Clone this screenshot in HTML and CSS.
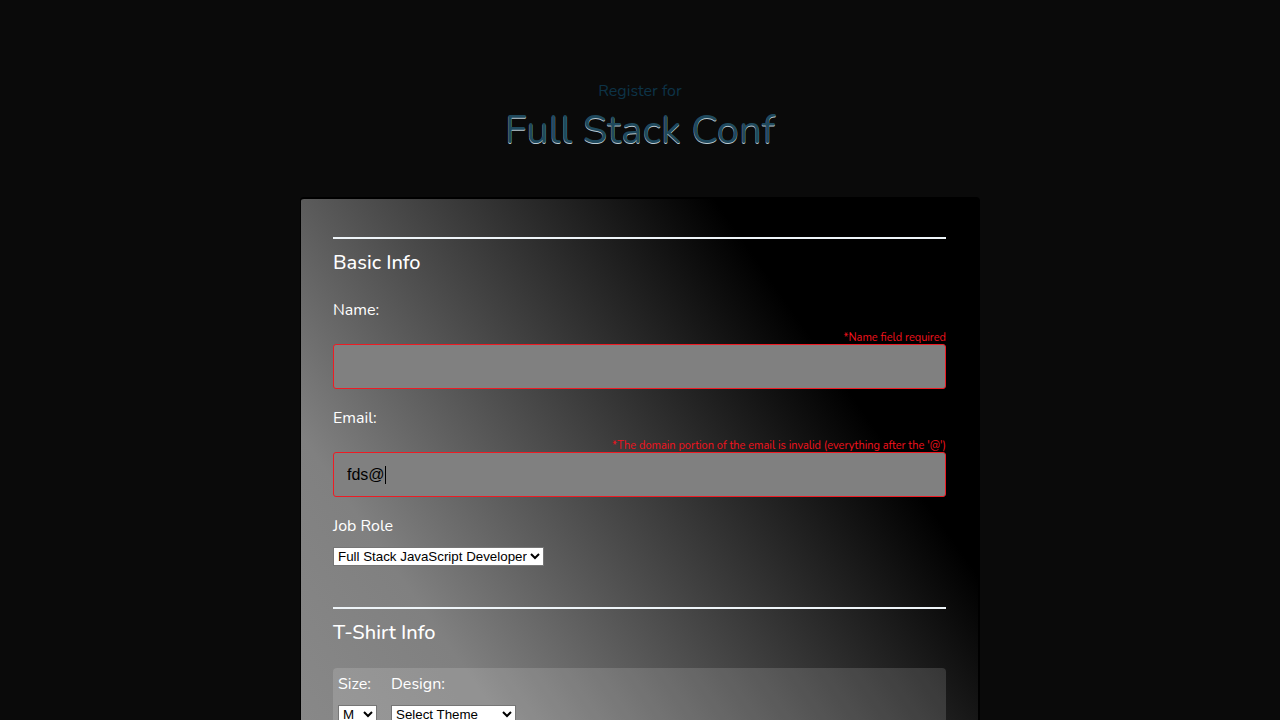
FILE: index.html
```html
<!DOCTYPE html>
<html lang="en">
<head>
<meta charset="utf-8">
<meta name="viewport" content="width=device-width, initial-scale=1">
<title>Full Stack Conf</title>
<link rel="stylesheet" href="styles.css">
</head>
<body>
<div class="container">
  <header class="masthead">
    <p class="kicker">Register for</p>
    <h1 class="title">Full Stack Conf</h1>
  </header>
  <form class="panel" novalidate>
    <fieldset class="section">
      <legend class="legend">Basic Info</legend>
      <label class="label" for="name">Name:</label>
      <p class="error" id="name-error">*Name field required</p>
      <div class="control">
        <input class="field" type="text" id="name" aria-describedby="name-error">
      </div>
      <label class="label" for="mail">Email:</label>
      <p class="error" id="mail-error">*The domain portion of the email is invalid (everything after the '@')</p>
      <div class="control">
        <input class="field" type="text" id="mail" value="fds@" aria-describedby="mail-error">
        <span class="caret"></span>
      </div>
      <label class="label" for="role">Job Role</label>
      <select class="select role" id="role"><option>Full Stack JavaScript Developer</option></select>
    </fieldset>
    <fieldset class="section">
      <legend class="legend">T-Shirt Info</legend>
      <div class="shirt">
        <div class="choice">
          <label class="label" for="size">Size:</label>
          <select class="select size" id="size"><option>M</option></select>
        </div>
        <div class="choice">
          <label class="label" for="design">Design:</label>
          <select class="select design" id="design"><option>Select Theme</option></select>
        </div>
      </div>
    </fieldset>
  </form>
</div>
</body>
</html>
```
FILE: styles.css
```css
* { box-sizing: border-box; }
html { background: #0a0a0a; scrollbar-width: none; }
body {
  margin: 0;
  color: #fff;
  font: 16px/24px "Nunito", "Open Sans", sans-serif;
}
.container {
  max-width: 680px;
  margin: 0 auto;
  padding-top: 79px;
}
.masthead { margin-bottom: 40px; text-align: center; }
.kicker { margin: 0; color: #0d3347; }
.title {
  margin: 0;
  color: #1f495d;
  font-size: 40px;
  font-weight: 400;
  line-height: 54px;
  text-shadow: 0 1px 0 #b9c8cf;
}
.panel {
  padding: 38px 32px 48px;
  border: solid #000;
  border-width: 2px 2px 2px 1px;
  border-radius: 4px;
  background: linear-gradient(235deg, #000 216px, #808080 690px, #999 1200px);
}
.section { margin: 0 0 41px; padding: 0; border: 0; min-width: 0; }
.legend {
  width: 100%;
  padding: 8px 0 19px;
  border-top: 2px solid #eef4f8;
  font-size: 20px;
  font-weight: 500;
  line-height: 32px;
}
.label { display: block; margin-bottom: 9px; }
.error {
  margin: 0;
  color: #f3121d;
  font-size: 11px;
  line-height: 13px;
  text-align: right;
}
.control { position: relative; margin-bottom: 17px; }
.field {
  display: block;
  width: 100%;
  height: 45px;
  padding: 0 13px;
  border: 1px solid #ed1c24;
  border-radius: 3px;
  outline: 0;
  background: #808080;
  color: #000;
  font: 16px "Liberation Sans", sans-serif;
}
.caret {
  position: absolute;
  top: 14px;
  left: 52px;
  width: 1px;
  height: 18px;
  background: #000;
}
.select {
  display: block;
  height: 19px;
  padding: 0;
  border: 1px solid #767676;
  border-radius: 0;
  background-color: #fff;
  color: #000;
  font-family: "Liberation Sans", sans-serif;
}
.role { width: 211px; }
.shirt {
  display: flex;
  gap: 14px;
  padding: 4px 5px 16px;
  border-radius: 4px;
  background: rgba(255, 255, 255, 0.14);
}
.size { width: 39px; }
.design { width: 125px; }
```
